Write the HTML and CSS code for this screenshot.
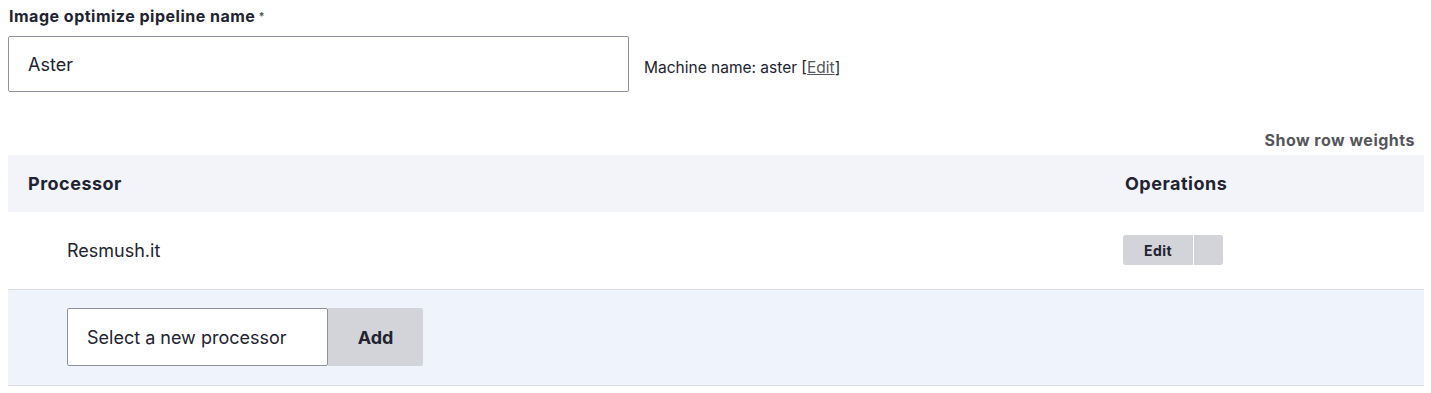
FILE: index.html
```html
<!DOCTYPE html>
<html lang="en">

<head>
    <meta charset="UTF-8">
    <meta name="viewport" content="width=device-width, initial-scale=1.0">
    <title>Image optimize pipeline</title>
    <link rel="stylesheet" href="styles.css">
</head>

<body>
    <div class="page">
        <!-- name field -->
        <div class="form-item">
            <label class="form-label" for="name">Image optimize pipeline name<span class="required">*</span></label>
            <div class="name-row">
                <input class="form-text" id="name" type="text" value="Aster">
                <span class="machine-name">Machine name: aster [<a href="#">Edit</a>]</span>
            </div>
        </div>

        <!-- processors table -->
        <div class="weights-toggle">Show row weights</div>
        <table class="processors">
            <thead>
                <tr>
                    <th class="col-processor">Processor</th>
                    <th class="col-ops">Operations</th>
                </tr>
            </thead>
            <tbody>
                <tr class="row">
                    <td class="indent">Resmush.it</td>
                    <td class="col-ops">
                        <div class="dropbutton">
                            <a href="#" class="dropbutton-main">Edit</a>
                            <span class="dropbutton-toggle"></span>
                        </div>
                    </td>
                </tr>
                <tr class="row-new">
                    <td class="indent" colspan="2">
                        <div class="add-row">
                            <div class="form-select">Select a new processor</div>
                            <button class="btn-add">Add</button>
                        </div>
                    </td>
                </tr>
            </tbody>
        </table>
    </div>
</body>

</html>
```

FILE: styles.css
```css
* {
    margin: 0;
    padding: 0;
    box-sizing: border-box;
}

body {
    font-family: Inter, "Noto Sans", sans-serif;
    color: #222330;
    background: #fff;
}

.page {
    padding: 6px 7px 0 8px;
}

/* name field */
.form-label {
    display: block;
    font-size: 16px;
    font-weight: 700;
    letter-spacing: 0.5px;
    line-height: 20px;
    margin-left: 1px;
}

.required {
    font-size: 11px;
    color: #55565b;
    margin-left: 3px;
    vertical-align: top;
}

.name-row {
    display: flex;
    align-items: center;
    margin-top: 10px;
}

.form-text {
    width: 621px;
    height: 56px;
    border: 1px solid #8e929c;
    border-radius: 2px;
    padding: 0 19px;
    font-family: inherit;
    font-size: 18px;
    color: #222330;
}

.machine-name {
    margin-left: 15px;
    font-size: 15.5px;
    color: #222330;
    padding-top: 6px;
}

.machine-name a {
    color: #55565b;
}

/* table */
.weights-toggle {
    text-align: right;
    font-size: 16px;
    font-weight: 700;
    letter-spacing: 0.5px;
    color: #55565b;
    margin-top: 38px;
    padding-right: 9px;
    line-height: 20px;
}

.processors {
    width: 100%;
    border-collapse: collapse;
    margin-top: 5px;
}

.processors th {
    background: #f3f4f9;
    height: 57px;
    text-align: left;
    font-size: 18px;
    font-weight: 700;
    letter-spacing: 0.5px;
    padding-left: 20px;
}

.processors .col-ops {
    width: 316px;
    padding-left: 15px;
}

.processors th.col-ops {
    padding-left: 17px;
}

.row td {
    height: 77px;
    font-size: 18px;
    border-bottom: 1px solid #dedfe4;
}

.indent {
    padding-left: 59px;
}

.dropbutton {
    display: flex;
    width: 100px;
    height: 30px;
    background: #d3d4d9;
    border-radius: 3px;
}

.dropbutton-main {
    width: 71px;
    display: flex;
    align-items: center;
    justify-content: center;
    font-size: 14px;
    font-weight: 700;
    letter-spacing: 0.5px;
    color: #222330;
    text-decoration: none;
    border-right: 1px solid #fff;
}

.dropbutton-toggle {
    flex: 1;
}

.row-new td {
    background: #eff3fb;
    height: 96px;
    border-bottom: 1px solid #dedfe4;
}

.add-row {
    display: flex;
}

.form-select {
    width: 261px;
    height: 58px;
    background: #fff;
    border: 1px solid #8e929c;
    border-radius: 2px;
    padding-left: 19px;
    display: flex;
    align-items: center;
    font-size: 18px;
}

.btn-add {
    width: 95px;
    height: 58px;
    border: none;
    border-radius: 0 2px 2px 0;
    background: #d3d4d9;
    font-family: inherit;
    font-size: 18px;
    font-weight: 700;
    color: #222330;
}
```
